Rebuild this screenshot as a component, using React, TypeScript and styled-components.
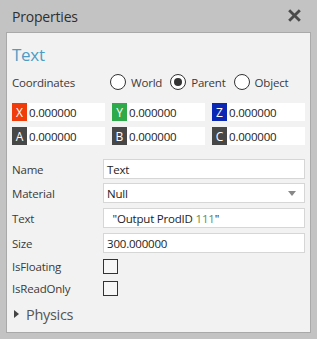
import styled, { createGlobalStyle } from "styled-components";

const GlobalStyle = createGlobalStyle`
  html, body {
    margin: 0;
    padding: 0;
    background: #c3c3c3;
  }
  body {
    font-family: "Open Sans", "Noto Sans", sans-serif;
    color: #333;
  }
`;

const coords = [
  { axis: "X", color: "#f03c0a", value: "0.000000" },
  { axis: "Y", color: "#2eaa4a", value: "0.000000" },
  { axis: "Z", color: "#0a28b4", value: "0.000000" },
  { axis: "A", color: "#474747", value: "0.000000" },
  { axis: "B", color: "#474747", value: "0.000000" },
  { axis: "C", color: "#474747", value: "0.000000" },
];

const Window = styled.div`
  width: 317px;
  height: 339px;
  display: flex;
  flex-direction: column;
`;

const TitleBar = styled.div`
  height: 32px;
  display: flex;
  align-items: center;
  justify-content: space-between;
  padding: 0 16px 0 12px;
  font-size: 14px;
  letter-spacing: -0.2px;
  color: #2f2f2f;
  box-sizing: border-box;
`;

const Close = styled.svg`
  width: 13px;
  height: 13px;
  margin-top: -2px;
`;

const Panel = styled.div`
  margin: 0 6px;
  height: 301px;
  box-sizing: border-box;
  border: 1px solid #a9a9a9;
  background: #f2f2f2;
  padding: 8px 5px 0 5px;
  display: flex;
  flex-direction: column;
`;

const Heading = styled.div`
  font-size: 17px;
  letter-spacing: -0.3px;
  color: #4d9cc4;
  height: 28px;
  line-height: 28px;
`;

const Row = styled.div<{ $h: number }>`
  display: flex;
  align-items: center;
  height: ${({ $h }) => $h}px;
  flex: none;
`;

const Label = styled.div`
  width: 91px;
  flex: none;
  font-size: 11.5px;
  letter-spacing: -0.2px;
  color: #3a3a3a;
`;

const RadioGroup = styled.div`
  display: flex;
  align-items: center;
  margin-left: 7px;
  gap: 8px;
`;

const RadioItem = styled.div`
  display: flex;
  align-items: center;
  gap: 5px;
  font-size: 11.5px;
  letter-spacing: -0.2px;
  color: #3a3a3a;
`;

const Circle = styled.span<{ $on?: boolean }>`
  width: 14px;
  height: 14px;
  border: 1px solid #333;
  border-radius: 50%;
  background: #fff;
  display: flex;
  align-items: center;
  justify-content: center;
  &::after {
    content: "";
    display: ${({ $on }) => ($on ? "block" : "none")};
    width: 8px;
    height: 8px;
    border-radius: 50%;
    background: #333;
  }
`;

const CoordGrid = styled.div`
  display: grid;
  grid-template-columns: repeat(3, 1fr);
  column-gap: 7px;
  row-gap: 6px;
  margin-top: 8px;
  margin-bottom: 12px;
`;

const CoordField = styled.div`
  display: flex;
  align-items: center;
  height: 18px;
  background: #fff;
`;

const Badge = styled.span<{ $c: string }>`
  width: 15px;
  height: 18px;
  background: ${({ $c }) => $c};
  color: #fff;
  font-size: 12px;
  display: flex;
  align-items: center;
  justify-content: center;
  flex: none;
`;

const CoordValue = styled.span`
  font-size: 11.5px;
  letter-spacing: -0.2px;
  color: #222;
  margin-left: 2px;
`;

const Input = styled.div`
  flex: 1;
  height: 20px;
  box-sizing: border-box;
  border: 1px solid #d6d6d6;
  background: #fff;
  display: flex;
  align-items: center;
  padding: 0 3px;
  font-size: 11.5px;
  letter-spacing: -0.2px;
  color: #222;
  position: relative;
`;

const Caret = styled.span`
  position: absolute;
  right: 8px;
  top: 7px;
  width: 0;
  height: 0;
  border-left: 4px solid transparent;
  border-right: 4px solid transparent;
  border-top: 5px solid #888;
`;

const Num = styled.span`
  color: #6e8a4e;
`;

const Check = styled.span`
  width: 15px;
  height: 15px;
  box-sizing: border-box;
  border: 1px solid #333;
  background: #f7f7f7;
`;

const Expander = styled.div`
  display: flex;
  align-items: center;
  gap: 7px;
  font-size: 14.5px;
  letter-spacing: -0.3px;
  color: #555;
  height: 28px;
  margin-left: 2px;
`;

const Tri = styled.span`
  width: 0;
  height: 0;
  border-top: 4px solid transparent;
  border-bottom: 4px solid transparent;
  border-left: 5px solid #444;
`;

export default function App() {
  return (
    <>
      <GlobalStyle />
      <Window>
        <TitleBar>
          <span>Properties</span>
          <Close viewBox="0 0 12 12">
            <path d="M2 2 L10 10 M10 2 L2 10" stroke="#4a4a4a" strokeWidth="2.6" strokeLinecap="square" />
          </Close>
        </TitleBar>
        <Panel>
          <Heading>Text</Heading>
          <Row $h={26}>
            <Label>Coordinates</Label>
            <RadioGroup>
              <RadioItem><Circle />World</RadioItem>
              <RadioItem><Circle $on />Parent</RadioItem>
              <RadioItem><Circle />Object</RadioItem>
            </RadioGroup>
          </Row>
          <CoordGrid>
            {coords.map((c) => (
              <CoordField key={c.axis}>
                <Badge $c={c.color}>{c.axis}</Badge>
                <CoordValue>{c.value}</CoordValue>
              </CoordField>
            ))}
          </CoordGrid>
          <Row $h={24}>
            <Label>Name</Label>
            <Input>Text</Input>
          </Row>
          <Row $h={24}>
            <Label>Material</Label>
            <Input>Null<Caret /></Input>
          </Row>
          <Row $h={26}>
            <Label>Text</Label>
            <Input>&nbsp;&nbsp;"Output ProdID <Num>&nbsp;111</Num>"</Input>
          </Row>
          <Row $h={24}>
            <Label>Size</Label>
            <Input>300.000000</Input>
          </Row>
          <Row $h={22}>
            <Label>IsFloating</Label>
            <Check />
          </Row>
          <Row $h={23}>
            <Label>IsReadOnly</Label>
            <Check />
          </Row>
          <Expander><Tri />Physics</Expander>
        </Panel>
      </Window>
    </>
  );
}
